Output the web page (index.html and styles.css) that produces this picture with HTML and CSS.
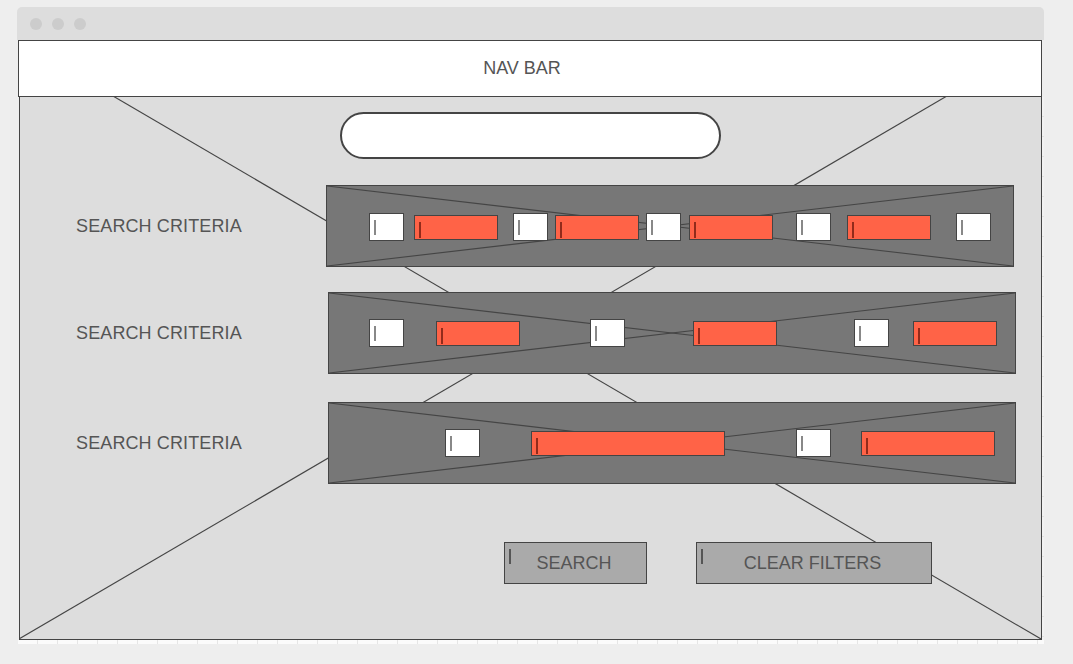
FILE: index.html
```html
<!DOCTYPE html>
<html lang="en">
<head>
    <meta charset="UTF-8">
    <meta name="viewport" content="width=device-width, initial-scale=1.0">
    <link rel="stylesheet" href="styles.css">
    <title>Search Wireframe</title>
</head>
<body>
    <div class="window">
        <div class="titlebar">
            <span class="dot"></span>
            <span class="dot"></span>
            <span class="dot"></span>
        </div>
        <div class="frame">
            <div class="screen">
                <!-- big placeholder cross behind the page -->
                <svg class="backdrop" viewBox="0 0 1022 598" preserveAspectRatio="none">
                    <line x1="0" y1="0" x2="1022" y2="598"/>
                    <line x1="0" y1="598" x2="1022" y2="0"/>
                </svg>
                <div class="navbar">NAV BAR</div>
                <div class="content">
                    <div class="search-bar"></div>

                    <div class="criteria-row row-one">
                        <div class="criteria-label">SEARCH CRITERIA</div>
                        <div class="criteria-panel panel-one">
                            <svg class="cross" viewBox="0 0 100 100" preserveAspectRatio="none">
                                <line x1="0" y1="0" x2="100" y2="100"/>
                                <line x1="0" y1="100" x2="100" y2="0"/>
                            </svg>
                            <div class="field box"></div>
                            <div class="field red"></div>
                            <div class="field box"></div>
                            <div class="field red"></div>
                            <div class="field box"></div>
                            <div class="field red"></div>
                            <div class="field box"></div>
                            <div class="field red"></div>
                            <div class="field box"></div>
                        </div>
                    </div>

                    <div class="criteria-row row-two">
                        <div class="criteria-label">SEARCH CRITERIA</div>
                        <div class="criteria-panel panel-two">
                            <svg class="cross" viewBox="0 0 100 100" preserveAspectRatio="none">
                                <line x1="0" y1="0" x2="100" y2="100"/>
                                <line x1="0" y1="100" x2="100" y2="0"/>
                            </svg>
                            <div class="field box"></div>
                            <div class="field red"></div>
                            <div class="field box"></div>
                            <div class="field red"></div>
                            <div class="field box"></div>
                            <div class="field red"></div>
                        </div>
                    </div>

                    <div class="criteria-row row-three">
                        <div class="criteria-label">SEARCH CRITERIA</div>
                        <div class="criteria-panel panel-three">
                            <svg class="cross" viewBox="0 0 100 100" preserveAspectRatio="none">
                                <line x1="0" y1="0" x2="100" y2="100"/>
                                <line x1="0" y1="100" x2="100" y2="0"/>
                            </svg>
                            <div class="field box"></div>
                            <div class="field red wide-a"></div>
                            <div class="field box"></div>
                            <div class="field red wide-b"></div>
                        </div>
                    </div>

                    <div class="actions">
                        <button class="btn btn-search" type="button">SEARCH</button>
                        <button class="btn btn-clear" type="button">CLEAR FILTERS</button>
                    </div>
                </div>
            </div>
            <div class="ruler-v"></div>
        </div>
        <div class="ruler-h"></div>
    </div>
</body>
</html>
```

FILE: styles.css
```css
* {
  margin: 0;
  padding: 0;
  box-sizing: border-box;
}

body {
  background-color: #eeeeee;
  font-family: "Liberation Sans", Arial, sans-serif;
  font-size: 18px;
  color: #555;
}

.window {
  width: 1027px;
  margin: 7px 0 0 17px;
}

.titlebar {
  height: 33px;
  display: flex;
  align-items: center;
  gap: 10px;
  padding-left: 13px;
  background-color: #dddddd;
  border-radius: 5px 5px 0 0;
}

.dot {
  width: 12px;
  height: 12px;
  border-radius: 50%;
  background-color: #cccccc;
}

.frame {
  display: flex;
  padding-left: 1px;
}

.screen {
  position: relative;
  width: 1024px;
}

.backdrop {
  position: absolute;
  top: 1px;
  left: 1px;
  width: 1022px;
  height: 598px;
}

.backdrop line,
.cross line {
  stroke: #454545;
  stroke-width: 1.1;
  vector-effect: non-scaling-stroke;
}

.navbar {
  position: relative;
  z-index: 2;
  height: 57px;
  display: flex;
  align-items: center;
  justify-content: center;
  padding-right: 16px;
  background-color: #fff;
  border: 1px solid #444;
}

.content {
  height: 543px;
  margin-left: 1px;
  padding-top: 15px;
  background-color: #dddddd;
  border: 1px solid #444;
  border-top: none;
}

.search-bar {
  position: relative;
  width: 381px;
  height: 47px;
  margin-left: 320px;
  background-color: #fff;
  border: 2px solid #444;
  border-radius: 24px;
}

/* criteria rows */
.criteria-row {
  position: relative;
  display: flex;
  align-items: center;
  padding-left: 56px;
}

.row-one { margin-top: 26px; }
.row-two { margin-top: 25px; }
.row-three { margin-top: 28px; }

.criteria-label {
  width: 252px;
  letter-spacing: 0.12px;
}

.row-one .criteria-label {
  width: 250px;
}

.criteria-panel {
  position: relative;
  width: 688px;
  height: 82px;
  display: grid;
  align-items: center;
  background-color: #777777;
  border: 1px solid #444;
}

.panel-one {
  grid-template-columns: 77px 94px 50px 91px 42px 92px 58px 100px 60px;
  padding-top: 2px;
}

.panel-two {
  grid-template-columns: 75px 116px 105px 152px 112px 108px;
}

.panel-three {
  grid-template-columns: 151px 245px 106px 164px;
}

.cross {
  position: absolute;
  top: 0;
  left: 0;
  width: 100%;
  height: 100%;
}

.field {
  position: relative;
  justify-self: end;
  padding: 6px 0 0 4px;
  border: 1px solid #444;
}

.field::before {
  content: "";
  display: block;
  width: 2px;
}

.field.box {
  width: 35px;
  height: 28px;
  background-color: #fff;
}

.field.box::before {
  height: 15px;
  background-color: #888;
}

.field.red {
  width: 84px;
  height: 25px;
  background-color: #ff6347;
}

.field.red::before {
  height: 16px;
  background-color: #922b1b;
}

.field.wide-a { width: 194px; }
.field.wide-b { width: 134px; }

/* buttons */
.actions {
  position: relative;
  display: flex;
  gap: 49px;
  margin: 58px 0 0 484px;
}

.btn {
  position: relative;
  height: 42px;
  padding-right: 3px;
  font: inherit;
  color: #555;
  background-color: #aaaaaa;
  border: 1px solid #444;
}

.btn::before {
  content: "";
  position: absolute;
  left: 4px;
  top: 6px;
  width: 2px;
  height: 15px;
  background-color: #555;
}

.btn-search { width: 143px; }
.btn-clear { width: 236px; }

/* rulers along the frame edges */
.ruler-v {
  width: 2px;
  margin-top: 57px;
  height: 543px;
  background: #f2f2f2 repeating-linear-gradient(to bottom, transparent 0 19px, #e2e2e2 19px 20px);
}

.ruler-h {
  width: 1026px;
  height: 4px;
  margin-left: 1px;
  background: #fbfbfb repeating-linear-gradient(to right, transparent 0 19px, #e6e6e6 19px 20px);
  box-shadow: 0 1px 1px rgba(0, 0, 0, 0.04);
}
```
